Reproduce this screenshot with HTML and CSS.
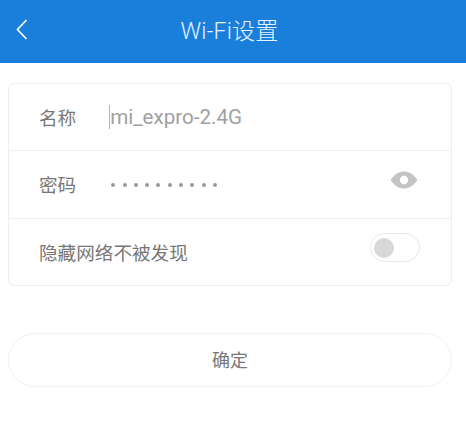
FILE: index.html
```html
<!DOCTYPE html>
<html lang="zh-CN">
<head>
  <meta charset="UTF-8" />
  <title>Wi-Fi设置</title>
  <link rel="stylesheet" href="styles.css">
</head>
<body>

  <header class="topbar">
    <svg class="back-icon" width="14" height="24" viewBox="0 0 14 24">
      <path d="M11.5 3 L2.5 12.5 L11.5 22" fill="none" stroke="#fff" stroke-width="1.7" />
    </svg>
    <h1>Wi-Fi设置</h1>
  </header>

  <div class="card">
    <div class="row">
      <span class="label">名称</span>
      <span class="value"><span class="caret"></span>mi_expro-2.4G</span>
    </div>
    <div class="row">
      <span class="label">密码</span>
      <span class="dots">
        <i></i><i></i><i></i><i></i><i></i><i></i><i></i><i></i><i></i><i></i>
      </span>
      <svg class="eye-icon" width="28" height="18" viewBox="0 0 28 18">
        <path d="M0.5 9 C5 2.5 9.5 0.5 14 0.5 C18.5 0.5 23 2.5 27.5 9 C23 15.5 18.5 17.5 14 17.5 C9.5 17.5 5 15.5 0.5 9 Z M14 4.8 A4.2 4.2 0 1 0 14 13.2 A4.2 4.2 0 1 0 14 4.8 Z" fill="#c4c4c4" fill-rule="evenodd" />
      </svg>
    </div>
    <div class="row">
      <span class="label">隐藏网络不被发现</span>
      <div class="switch"><div class="knob"></div></div>
    </div>
  </div>

  <button class="confirm">确定</button>

</body>
</html>
```

FILE: styles.css
```css
body {
  margin: 0;
  background: #fff;
  font-family: "Liberation Sans", "Noto Sans CJK SC", sans-serif;
  color: #777;
}

.topbar {
  height: 63px;
  background: #1a7edb;
  display: flex;
  align-items: center;
  justify-content: center;
  position: relative;
}

.topbar h1 {
  margin: 0 7px 6px 0;
  font-family: Roboto, "Noto Sans CJK SC", sans-serif;
  font-size: 23px;
  font-weight: 300;
  letter-spacing: 0.2px;
  color: #e6f2fc;
}

.back-icon {
  position: absolute;
  left: 15px;
  top: 17px;
}

.card {
  margin: 20px 14px 0 8px;
  border: 1px solid #eeeeee;
  border-radius: 6px;
}

.row {
  height: 67px;
  padding: 0 31px 0 30px;
  display: flex;
  align-items: center;
  border-bottom: 1px solid #eeeeee;
  font-size: 18.6px;
}

.row:first-child,
.row:last-child {
  height: 66px;
}

.row:last-child {
  border-bottom: none;
}

.label {
  margin-bottom: 2px;
  color: #777;
}

.value {
  margin-left: 33px;
  display: flex;
  align-items: center;
  font-family: Roboto, sans-serif;
  font-weight: 400;
  color: #a0a0a0;
  font-size: 20.6px;
}

.caret {
  width: 1px;
  height: 24px;
  background: #b4b4b4;
}

.dots {
  margin-left: 35px;
  display: flex;
  gap: 7.3px;
}

.dots i {
  width: 4px;
  height: 4px;
  border-radius: 50%;
  background: #999;
}

.eye-icon {
  margin-left: auto;
  margin-right: 2px;
  margin-bottom: 9px;
}

.switch {
  margin-left: auto;
  margin-bottom: 9px;
  width: 50px;
  height: 29px;
  box-sizing: border-box;
  border: 1px solid #e8e8e8;
  border-radius: 15px;
  display: flex;
  align-items: center;
  padding-left: 3px;
}

.knob {
  width: 20px;
  height: 20px;
  border-radius: 50%;
  background: #d8d8d8;
}

.confirm {
  display: block;
  width: 444px;
  height: 54px;
  margin: 47px 0 0 8px;
  padding: 0 0 3px;
  background: #fff;
  border: 1px solid #f2f2f2;
  border-radius: 27px;
  font-family: "Liberation Sans", "Noto Sans CJK SC", sans-serif;
  font-size: 18px;
  color: #777;
}
```
